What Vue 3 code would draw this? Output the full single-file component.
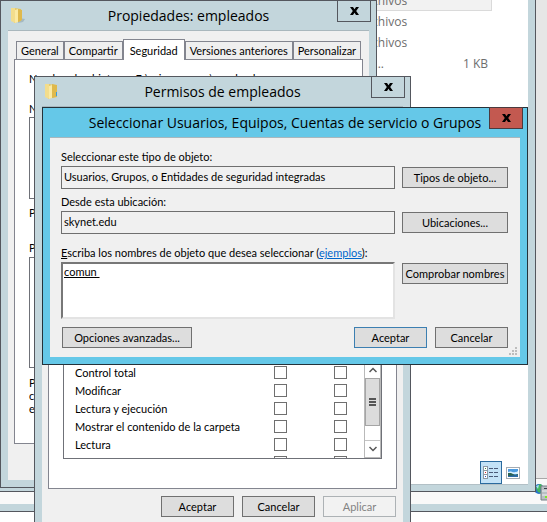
<script setup>
import { ref } from 'vue'

const files = [
  { type: 'Carpeta de archivos', size: '', selected: true },
  { type: 'Carpeta de archivos', size: '' },
  { type: 'Carpeta de archivos', size: '' },
  { type: 'Opciones de c...', size: '1 KB' },
]

const tabs = ['General', 'Compartir', 'Seguridad', 'Versiones anteriores', 'Personalizar']
const activeTab = ref('Seguridad')

const permissions = ref([
  { name: 'Control total', allow: false, deny: false },
  { name: 'Modificar', allow: false, deny: false },
  { name: 'Lectura y ejecución', allow: false, deny: false },
  { name: 'Mostrar el contenido de la carpeta', allow: false, deny: false },
  { name: 'Lectura', allow: false, deny: false },
  { name: 'Escritura', allow: false, deny: false },
])

const objectType = ref('Usuarios, Grupos, o Entidades de seguridad integradas')
const location = ref('skynet.edu')
const names = ref('comun ')
</script>

<template>
  <main class="desktop">
    <div class="console">
      <div class="console-body"></div>
      <div class="console-status">
        <svg class="server-icon" width="20" height="18" viewBox="0 0 20 18" aria-hidden="true">
          <circle cx="4" cy="6" r="5" fill="#2a74c8" />
          <path d="M3 2 L6 1 L8 4 L5 7 L6 10 L3 9 L1 5 Z" fill="#42b85a" />
          <path d="M1 3 L4 2 L3 6 Z" fill="#a8dcf5" />
          <path d="M6 3 H20 V17 H6 Z" fill="#b9bfc4" stroke="#777f86" />
          <path d="M7 8 H20 M7 12 H20" stroke="#eef1f3" />
          <path d="M9 5.5 H12" stroke="#3c4247" />
          <rect x="10" y="13" width="3" height="2" fill="#7bea28" />
        </svg>
      </div>
    </div>

    <section class="explorer" aria-label="Explorador">
      <div class="explorer-client">
        <div class="file-list">
          <div v-for="(f, i) in files" :key="i" class="file" :class="{ selected: f.selected }">
            <span class="file-type">{{ f.type }}</span>
            <span class="file-size">{{ f.size }}</span>
          </div>
        </div>
        <div class="views">
          <button class="view on" aria-label="Detalles">
            <svg width="16" height="14" viewBox="0 0 16 14">
              <g fill="#fff" stroke="#8d99a5">
                <rect x="0.5" y="0.5" width="4" height="4" />
                <rect x="0.5" y="4.5" width="4" height="4" />
                <rect x="0.5" y="8.5" width="4" height="4" />
              </g>
              <rect x="2" y="2" width="1" height="1" fill="#3c8a4c" />
              <rect x="2" y="6" width="1" height="1" fill="#d22" />
              <rect x="2" y="10" width="1" height="1" fill="#2452c8" />
              <path d="M6 2.5h4M11 2.5h4M6 6.5h4M11 6.5h4M6 10.5h4M11 10.5h4" stroke="#4a5a78" />
            </svg>
          </button>
          <button class="view" aria-label="Iconos grandes">
            <svg width="14" height="12" viewBox="0 0 14 12">
              <rect x="0.5" y="0.5" width="13" height="11" fill="#fff" stroke="#a4abb2" />
              <rect x="2" y="2" width="10" height="8" fill="#4c9be0" />
              <path d="M2 5 C5 3 8 7 12 4 V7 H2 Z" fill="#d5efff" />
              <path d="M2 6 L5 6 L9 8 L12 7 V10 H2 Z" fill="#2c6252" />
              <path d="M2 9 L12 8 V10 H2 Z" fill="#2a6ba8" />
            </svg>
          </button>
        </div>
      </div>
    </section>

    <section class="window props" aria-label="Propiedades: empleados">
      <header class="titlebar">
        <svg class="folder" width="16" height="18" viewBox="0 0 16 18" aria-hidden="true">
          <path d="M9 11 L15 12 L13 15 L8 16 Z" fill="#8fa5b0" opacity=".6" />
          <path d="M4 1 L11 2 V14 L4 16 Z" fill="#e5c65c" />
          <path d="M1 1 H5 V16 L1 14 Z" fill="#f3dd8c" />
          <path d="M5 3 L8 2 V15 L5 16 Z" fill="#fbeaa4" />
          <path d="M8 2 L12 3 V13 L8 15 Z" fill="#dfb94c" />
        </svg>
        <h2>Propiedades: empleados</h2>
        <button class="close" aria-label="Cerrar">
          <svg width="9" height="8" viewBox="0 0 9 8"><path d="M0 0H3L4.5 2.2L6 0H9L6.2 4L9 8H6L4.5 5.8L3 8H0L2.8 4Z" /></svg>
        </button>
      </header>
      <div class="client">
        <nav class="tabs" role="tablist">
          <button
            v-for="t in tabs"
            :key="t"
            role="tab"
            class="tab"
            :class="{ active: t === activeTab }"
            :aria-selected="t === activeTab"
            @click="activeTab = t"
          >{{ t }}</button>
        </nav>
        <div class="panel props-panel">
          <p class="object-name"><span>Nombre de objeto:</span><span>E:\mis recursos\empleados</span></p>
          <p class="groups-label">Nombres de grupos o usuarios:</p>
          <div class="box groups"></div>
          <p class="change-label">Para cambiar los permisos, haga clic en Editar.</p>
          <p class="perms-label">Permisos de empleados</p>
          <div class="box perms"></div>
          <p class="advanced">Para especificar permisos especiales o<br />configuraciones avanzadas, haga clic<br />en Opciones avanzadas.</p>
        </div>
      </div>
    </section>

    <section class="window permissions" aria-label="Permisos de empleados">
      <header class="titlebar">
        <svg class="folder" width="16" height="18" viewBox="0 0 16 18" aria-hidden="true">
          <path d="M4 1 L11 2 V14 L4 16 Z" fill="#e5c65c" />
          <path d="M1 1 H5 V16 L1 14 Z" fill="#f3dd8c" />
          <path d="M5 3 L8 2 V15 L5 16 Z" fill="#fbeaa4" />
          <path d="M8 1 L13 2 V14 L8 15 Z" fill="#dfb94c" />
          <path d="M12 9 L13 9 V13 L12 13 Z" fill="#3c9ad8" />
        </svg>
        <h2>Permisos de empleados</h2>
        <button class="close" aria-label="Cerrar">
          <svg width="9" height="8" viewBox="0 0 9 8"><path d="M0 0H3L4.5 2.2L6 0H9L6.2 4L9 8H6L4.5 5.8L3 8H0L2.8 4Z" /></svg>
        </button>
      </header>
      <div class="client">
        <div class="panel perm-panel">
          <div class="box perm-box">
            <table class="perm-table">
              <tbody>
                <tr v-for="p in permissions" :key="p.name">
                  <th scope="row">{{ p.name }}</th>
                  <td><input v-model="p.allow" type="checkbox" :aria-label="'Permitir ' + p.name" /></td>
                  <td class="deny"><input v-model="p.deny" type="checkbox" :aria-label="'Denegar ' + p.name" /></td>
                </tr>
              </tbody>
            </table>
            <div class="scroll">
              <span class="arrow"><svg width="8" height="6" viewBox="0 0 8 6"><path d="M0.5 5L4 1.5L7.5 5" /></svg></span>
              <span class="thumb"><svg width="7" height="8" viewBox="0 0 7 8"><path d="M0 1H7M0 4H7M0 7H7" /></svg></span>
              <span class="track"></span>
              <span class="arrow"><svg width="8" height="6" viewBox="0 0 8 6"><path d="M0.5 1L4 4.5L7.5 1" /></svg></span>
            </div>
          </div>
        </div>
        <footer class="actions">
          <button class="btn">Aceptar</button>
          <button class="btn">Cancelar</button>
          <button class="btn" disabled>Aplicar</button>
        </footer>
      </div>
    </section>

    <section class="window select" aria-label="Seleccionar Usuarios, Equipos, Cuentas de servicio o Grupos">
      <header class="titlebar">
        <h2>Seleccionar Usuarios, Equipos, Cuentas de servicio o Grupos</h2>
        <button class="close" aria-label="Cerrar">
          <svg width="9" height="8" viewBox="0 0 9 8"><path d="M0 0H3L4.5 2.2L6 0H9L6.2 4L9 8H6L4.5 5.8L3 8H0L2.8 4Z" /></svg>
        </button>
      </header>
      <form class="client" @submit.prevent>
        <div class="field">
          <label for="type">Seleccionar este tipo de objeto:</label>
          <div class="field-row">
            <input id="type" v-model="objectType" type="text" readonly />
            <button type="button" class="btn">Tipos de objeto...</button>
          </div>
        </div>
        <div class="field">
          <label for="location">Desde esta ubicación:</label>
          <div class="field-row">
            <input id="location" v-model="location" type="text" readonly />
            <button type="button" class="btn">Ubicaciones...</button>
          </div>
        </div>
        <div class="field names">
          <div><label for="names"><u>E</u>scriba los nombres de objeto que desea seleccionar</label> (<a href="#">ejemplos</a>):</div>
          <div class="field-row">
            <textarea id="names" v-model="names" spellcheck="false"></textarea>
            <button type="button" class="btn">Comprobar nombres</button>
          </div>
        </div>
        <footer class="actions">
          <button type="button" class="btn wide">Opciones avanzadas...</button>
          <button type="submit" class="btn default">Aceptar</button>
          <button type="button" class="btn">Cancelar</button>
        </footer>
        <svg class="grip" width="8" height="8" viewBox="0 0 8 8" fill="#bdbdbd" aria-hidden="true">
          <path d="M6 0h2v2h-2zM3 3h2v2h-2zM6 3h2v2h-2zM0 6h2v2h-2zM3 6h2v2h-2zM6 6h2v2h-2z" />
        </svg>
      </form>
    </section>
  </main>
</template>

<style>
body {
  margin: 0;
  overflow: hidden;
}
</style>

<style scoped>
.desktop {
  position: relative;
  min-height: 100vh;
  overflow: hidden;
  background: #fff;
  color: #000;
  font: 11px/13px Lato, "Liberation Sans", sans-serif;
}
.desktop * {
  box-sizing: border-box;
}
h2,
p {
  margin: 0;
  font-weight: 400;
}
button,
input,
textarea {
  margin: 0;
  padding: 0;
  border-radius: 0;
  color: inherit;
  font: inherit;
}

/* background windows */
.console {
  border-bottom: 1px solid #54575e;
}
.console-body {
  height: 479px;
  background: #e6e6e6;
  border-bottom: 1px solid #a8a8a8;
}
.console-status {
  display: flex;
  justify-content: flex-end;
  height: 32px;
  padding-top: 4px;
  background: #f9f9f9;
  border-bottom: 7px solid #c3d6dc;
}
.server-icon {
  flex: none;
  margin-right: -8px;
}
.explorer {
  position: absolute;
  top: 0;
  left: 0;
  right: 11px;
  height: 492px;
  padding-right: 7px;
  border: solid #54575e;
  border-width: 0 1px 1px 0;
  background: #c3d6dc;
}
.explorer-client {
  display: flex;
  flex-direction: column;
  justify-content: space-between;
  height: 485px;
  background: #fff;
  border-bottom: 1px solid #b2c0c6;
}
.file-list {
  margin: -11px 36px 0 0;
  color: #6d6d6d;
  font: 12px/21px "Open Sans", "Noto Sans", sans-serif;
}
.file {
  display: flex;
  justify-content: flex-end;
  height: 21px;
  padding-right: 4px;
}
.file.selected {
  height: 22px;
  padding-right: 3px;
  border: 1px solid #dadada;
  background: #f2f2f2;
}
.file-type {
  width: 110px;
  margin-right: 36px;
  white-space: nowrap;
}
.file-size {
  width: 46px;
  text-align: right;
}
.views {
  display: flex;
  justify-content: flex-end;
  padding-right: 4px;
}
.view {
  display: grid;
  place-items: center;
  width: 22px;
  height: 23px;
  border: 1px solid transparent;
  background: none;
}
.view.on {
  border-color: #2a6a9e;
  background: #c3e2f7;
}

/* dialog chrome */
.window {
  position: absolute;
  padding: 0 7px 7px;
  border: 1px solid #54575e;
  background: #c3d6dc;
}
.titlebar {
  display: flex;
  justify-content: center;
  align-items: center;
  position: relative;
  height: 29px;
}
.titlebar h2 {
  font: 14px/20px "Open Sans", "Noto Sans", sans-serif;
  white-space: nowrap;
}
.folder {
  position: absolute;
  left: 2px;
  top: 6px;
}
.close {
  position: absolute;
  top: -1px;
  right: -2px;
  display: grid;
  place-items: center;
  width: 34px;
  height: 22px;
  border: 1px solid #54575e;
  background: transparent;
}
.client {
  position: relative;
  border-top: 1px solid #a9b7bd;
  background: #f0f0f0;
}
.panel {
  border: 1px solid #83858f;
  background: #fff;
}
.box {
  border: 1px solid #6f7178;
  background: #fff;
}
.btn {
  width: 73px;
  height: 21px;
  border: 1px solid #707070;
  background: #dddddd;
  white-space: nowrap;
}
.btn:disabled {
  border-color: #adb2b5;
  background: #f2f2f2;
  color: #838383;
}
.btn.default {
  border-color: #3c7fb1;
}
.actions {
  display: flex;
  justify-content: flex-end;
  gap: 8px;
}

/* properties dialog */
.props {
  top: 0;
  left: 0;
  width: 377px;
}
.props .client {
  padding: 8px 6px 36px;
}
.tabs {
  display: flex;
  align-items: flex-end;
  height: 20px;
  padding-left: 2px;
}
.tab {
  height: 18px;
  padding: 0 4px;
  border: 1px solid #83858f;
  border-bottom: 0;
  background: #efefef;
  white-space: nowrap;
}
.tab.active {
  position: relative;
  height: 21px;
  margin-bottom: -1px;
  padding: 0 6px;
  background: #fff;
}
.props-panel {
  padding: 12px 14px 28px;
}
.object-name {
  display: flex;
  gap: 16px;
}
.groups-label {
  margin-top: 17px;
}
.groups {
  height: 82px;
  margin-top: 2px;
}
.change-label {
  margin-top: 7px;
}
.perms-label {
  margin-top: 22px;
}
.perms {
  height: 111px;
  margin-top: 3px;
}
.advanced {
  margin-top: 8px;
}

/* permissions dialog */
.permissions {
  top: 76px;
  left: 34px;
  width: 377px;
}
.permissions .client {
  padding: 8px 6px;
}
.perm-panel {
  padding: 0 14px 29px;
}
.perm-box {
  display: flex;
  height: 111px;
  margin-top: 232px;
  overflow: hidden;
}
.perm-table {
  flex: 1;
  align-self: flex-start;
  margin-top: 14px;
  border-collapse: collapse;
}
.perm-table tr {
  height: 18px;
}
.perm-table th {
  padding: 0 0 0 11px;
  font-weight: 400;
  text-align: left;
}
.perm-table td {
  width: 60px;
  padding: 0;
}
.perm-table .deny {
  width: 30px;
}
.perm-table input {
  display: block;
  appearance: none;
  width: 13px;
  height: 13px;
  border: 1px solid #6f6f6f;
  background: #fff;
}
.scroll {
  display: flex;
  flex-direction: column;
  width: 17px;
  padding-top: 12px;
  border: 1px solid #b9b9b9;
}
.arrow {
  display: grid;
  place-items: center;
  flex: none;
  height: 16px;
}
.scroll path {
  fill: none;
  stroke: #555;
  stroke-width: 2;
}
.arrow path {
  stroke-width: 1.5;
}
.thumb {
  display: grid;
  place-items: center;
  height: 48px;
  border: 1px solid #a5a5a5;
  background: #dcdcdc;
}
.track {
  flex: 1;
  border-bottom: 1px solid #c4c4c4;
}
.permissions .actions {
  margin-top: 7px;
  padding-right: 1px;
}

/* object picker */
.select {
  top: 107px;
  left: 42px;
  width: 486px;
  border-color: #24323a;
  background: #65c8e8;
}
.select .close {
  right: -3px;
  border-color: #4b3a3e;
  background: #c35950;
}
.select .client {
  padding: 12px 12px 9px 11px;
}
.field {
  margin-bottom: 6px;
}
.field-row {
  display: flex;
  align-items: center;
  gap: 7px;
  margin-top: 3px;
}
.field-row input,
.field-row textarea {
  flex: 1;
  min-width: 0;
  height: 23px;
  padding: 0 2px 2px;
  border: 1px solid #6f6f6f;
  background: #f0f0f0;
}
.field-row .btn {
  width: 106px;
}
.names {
  margin: 12px 0 8px;
}
.names .field-row {
  align-items: flex-start;
}
.names textarea {
  display: block;
  height: 57px;
  padding: 1px;
  border: 2px solid;
  border-color: #777 #e3e3e3 #e3e3e3 #777;
  background: #fff;
  resize: none;
  text-decoration: underline;
}
.names .btn {
  margin-top: 1px;
}
.names a {
  color: #0066cc;
}
.btn.wide {
  width: 130px;
  margin: 0 auto 0 1px;
}
.grip {
  position: absolute;
  right: 3px;
  bottom: 2px;
}
</style>
